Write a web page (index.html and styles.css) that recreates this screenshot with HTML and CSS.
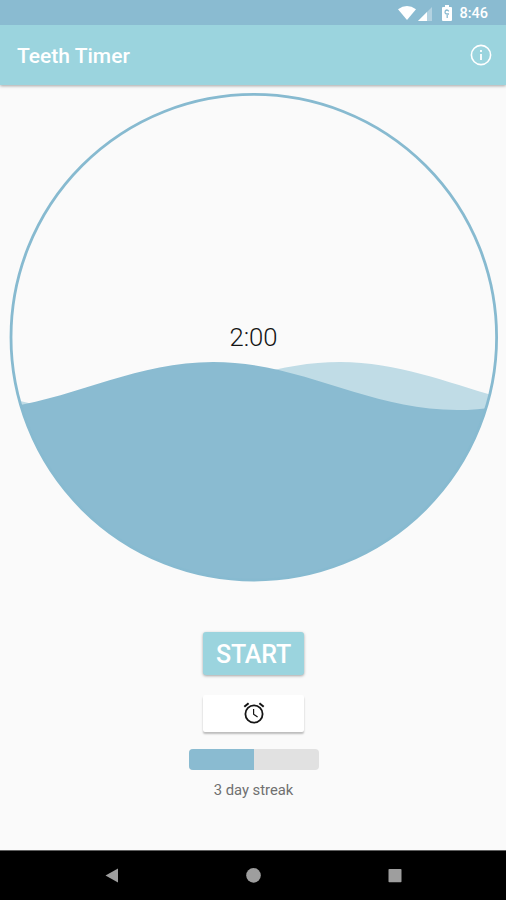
FILE: index.html
```html
<!DOCTYPE html>
<html lang="en">
<head>
<meta charset="utf-8">
<title>Teeth Timer</title>
<link rel="stylesheet" href="styles.css">
</head>
<body>
<div class="status-bar">
  <svg class="wifi" width="18" height="14" viewBox="0 0 18 14"><path d="M0 3.2Q9-3 18 3.2L9 14z" fill="#fff"/></svg>
  <svg class="signal" width="14" height="14" viewBox="0 0 14 14"><path d="M14 0v14H0z" fill="#fff" opacity=".35"/><path d="M9 5v9H0z" fill="#fff"/></svg>
  <svg class="battery" width="10" height="16" viewBox="0 0 10 16"><path d="M3 0h4v2h2q1 0 1 1v12q0 1-1 1H1q-1 0-1-1V3q0-1 1-1h2z" fill="#fff"/><path d="M6.8 6.3Q6 5 4.8 5 3 5.2 3 7.2 3 9 4.8 9H7M5.2 10v3" fill="none" stroke="#8abbd1" stroke-width="1.3"/></svg>
  <span class="clock">8:46</span>
</div>
<header class="app-bar">
  <h1>Teeth Timer</h1>
  <svg width="22" height="22" viewBox="0 0 22 22"><circle cx="11" cy="11" r="9.6" fill="none" stroke="#fff" stroke-width="1.6"/><path d="M11 10v6M11 6v2" stroke="#fff" stroke-width="1.8"/></svg>
</header>
<main>
  <div class="timer">
    <svg width="490" height="490" viewBox="9 92 490 490">
      <defs><clipPath id="dial"><circle cx="253.8" cy="337.2" r="243"/></clipPath></defs>
      <g clip-path="url(#dial)">
        <path fill="#c0dce6" d="M-140 364C-59 364 0 410 89 410S251 362 340 362S495 410 584 410V600H-140z"/>
        <path fill="#8abbd1" d="M-31 410C58 410 124 362 213 362S368 410 457 410S612 362 701 362V600H-31z"/>
      </g>
      <circle cx="253.8" cy="337.2" r="242.8" fill="none" stroke="#87bad0" stroke-width="2.8"/>
    </svg>
    <span class="time">2:00</span>
  </div>
  <button class="start">START</button>
  <button class="alarm" aria-label="Reminder">
    <svg width="22" height="22" viewBox="0 0 22 22" fill="none" stroke="#151515"><circle cx="11" cy="12" r="8.6" stroke-width="1.8"/><path d="M1.3 4.8L5.6 1.2M16.4 1.2l4.3 3.6" stroke-width="2"/><path d="M10.6 7v5.3l4 2.8" stroke-width="1.2"/></svg>
  </button>
  <div class="progress"><div class="fill"></div></div>
  <p class="streak">3 day streak</p>
</main>
<nav class="nav-bar">
  <svg width="14" height="16" viewBox="0 0 14 16"><path d="M13 .5v14L.5 7.5z" fill="#9e9e9e"/></svg>
  <svg width="16" height="16" viewBox="0 0 16 16"><circle cx="7.5" cy="7.4" r="7.3" fill="#9e9e9e"/></svg>
  <svg width="14" height="16" viewBox="0 0 14 16"><rect x=".5" y=".9" width="13" height="13.4" rx=".8" fill="#9e9e9e"/></svg>
</nav>
</body>
</html>
```
FILE: styles.css
```css
* { box-sizing: border-box; }
body {
  margin: 0;
  height: 900px;
  display: flex;
  flex-direction: column;
  overflow: hidden;
  background: #fafafa;
  font-family: Roboto, sans-serif;
}
svg { display: block; flex: none; }
.status-bar {
  position: relative;
  z-index: 1;
  height: 25px;
  flex: none;
  display: flex;
  align-items: center;
  justify-content: flex-end;
  padding: 2px 18px 0 0;
  background: #8abbd1;
  color: #fff;
}
.wifi { margin-top: -2px; }
.signal { margin-left: 2px; }
.battery { margin: -2px 0 0 10px; }
.clock { margin-left: 7px; font-size: 14.5px; font-weight: 500; line-height: 20px; }
.app-bar {
  height: 60px;
  flex: none;
  display: flex;
  align-items: center;
  justify-content: space-between;
  padding: 0 14px 0 17px;
  background: #9bd4de;
  box-shadow: 0 1px 3px rgba(0, 0, 0, .35);
}
.app-bar h1 {
  margin: 2px 0 0;
  color: #fff;
  font-size: 21px;
  font-weight: 500;
  line-height: 28px;
}
main {
  flex: 1;
  display: flex;
  flex-direction: column;
  align-items: center;
  padding: 7px 0 0 1px;
}
.timer { display: grid; place-items: center; }
.timer > * { grid-area: 1 / 1; }
.time { color: #151515; font-size: 25.7px; font-weight: 300; line-height: 30px; }
button { border: 0; padding: 0; font-family: inherit; }
.start {
  width: 101px;
  height: 43px;
  margin-top: 50px;
  padding-top: 1px;
  border-radius: 3px;
  background: #9bd4de;
  box-shadow: 0 1px 3px rgba(0, 0, 0, .35);
  color: #fff;
  font-size: 25px;
  font-weight: 500;
  letter-spacing: -.2px;
}
.alarm {
  width: 101px;
  height: 37px;
  margin-top: 20px;
  padding-bottom: 1px;
  display: flex;
  align-items: center;
  justify-content: center;
  border-radius: 2px;
  background: #fff;
  box-shadow: 0 2px 2px rgba(0, 0, 0, .25);
}
.progress {
  width: 130px;
  height: 21px;
  margin-top: 17px;
  border-radius: 4px;
  background: #e1e1e1;
  overflow: hidden;
}
.fill { width: 50%; height: 100%; background: #8abbd1; }
.streak { margin: 11px 0 0; color: #707070; font-size: 14.8px; line-height: 18px; }
.nav-bar {
  height: 50px;
  flex: none;
  display: flex;
  align-items: center;
  justify-content: space-between;
  padding: 0 104px 0 105px;
  border-top: 1px solid #606060;
  background: #000;
}
```
